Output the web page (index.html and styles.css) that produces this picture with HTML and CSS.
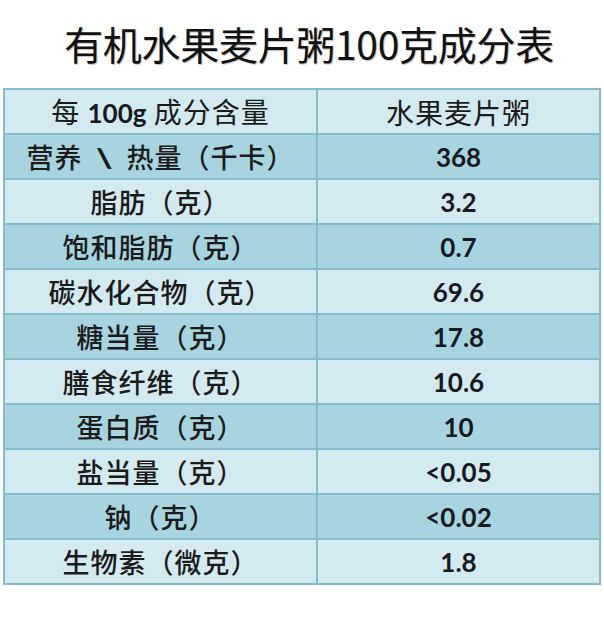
FILE: index.html
```html
<!DOCTYPE html>
<html lang="zh-CN">
<head>
<meta charset="utf-8">
<title>有机水果麦片粥100克成分表</title>
<link rel="stylesheet" href="styles.css">
</head>
<body>
<div class="page">
  <h1 class="title">有机水果麦片粥100克成分表</h1>
  <table class="nutri">
    <colgroup><col class="c1"><col class="c2"></colgroup>
    <tr class="light head"><td>每 <b class="num">100g</b> 成分含量</td><td>水果麦片粥</td></tr>
    <tr class="dark"><td>营养 <span class="bs">\</span> 热量（千卡）</td><td class="num">368</td></tr>
    <tr class="light"><td>脂肪（克）</td><td class="num">3.2</td></tr>
    <tr class="dark"><td>饱和脂肪（克）</td><td class="num">0.7</td></tr>
    <tr class="light"><td>碳水化合物（克）</td><td class="num">69.6</td></tr>
    <tr class="dark"><td>糖当量（克）</td><td class="num">17.8</td></tr>
    <tr class="light"><td>膳食纤维（克）</td><td class="num">10.6</td></tr>
    <tr class="dark"><td>蛋白质（克）</td><td class="num">10</td></tr>
    <tr class="light"><td>盐当量（克）</td><td class="num">&lt;0.05</td></tr>
    <tr class="dark"><td>钠（克）</td><td class="num">&lt;0.02</td></tr>
    <tr class="light"><td>生物素（微克）</td><td class="num">1.8</td></tr>
  </table>
</div>
</body>
</html>
```
FILE: styles.css
```css
html, body {
  margin: 0;
  padding: 0;
  background: #ffffff;
}
.page {
  width: 604px;
  height: 620px;
  font-family: "Noto Sans CJK SC", "Noto Sans", sans-serif;
  color: #1b1b1b;
}
.title {
  margin: 0;
  height: 88px;
  display: flex;
  align-items: center;
  justify-content: center;
  padding-left: 14px;
  padding-bottom: 2px;
  box-sizing: border-box;
  font-size: 39px;
  font-weight: 400;
  letter-spacing: -0.3px;
  color: #111;
  text-shadow: 1px 1px 1px rgba(0,0,0,0.25);
}
.nutri {
  margin-left: 3px;
  width: 596px;
  border-collapse: collapse;
  border: 2px solid #80b6c6;
  table-layout: fixed;
}
.c1 { width: 313px; }
.c2 { width: 283px; }
.nutri td {
  height: 43px;
  padding: 0;
  border: 2px solid #84bccb;
  text-align: center;
  vertical-align: middle;
  font-size: 27px;
  font-weight: 500;
  letter-spacing: 1px;
  line-height: 1;
}
.light td { background: #d3eaf1; }
.dark td { background: #a8d4e0; }
.head td { font-size: 28px; font-weight: 400; }
.num {
  font-family: Lato, "Open Sans", sans-serif;
  font-weight: 700;
  color: #151a22;
}
.nutri td.num { font-size: 26px; font-weight: 700; letter-spacing: 0; }
.head td .num { font-size: 26px; letter-spacing: 0; }
.bs {
  font-family: Lato, sans-serif;
  font-weight: 900;
  display: inline-block;
  transform: scaleX(1.3);
  margin: 0 8px;
}
```
